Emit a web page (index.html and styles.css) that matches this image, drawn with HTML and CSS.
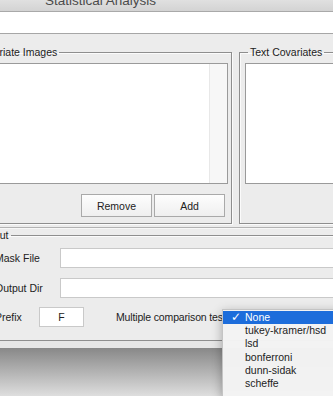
FILE: index.html
```html
<!DOCTYPE html>
<html lang="en">
<head>
    <meta charset="UTF-8">
    <title>Statistical Analysis</title>
    <link rel="stylesheet" href="styles.css">
</head>
<body>
    <div class="window">
        <div class="titlebar"><span>Statistical Analysis</span></div>
        <div class="toolbar"></div>
        <div class="content">
            <div class="top-row">
                <fieldset class="group images">
                    <legend>Covariate Images</legend>
                    <div class="listbox"><div class="scroll"></div></div>
                    <div class="buttons">
                        <button type="button">Remove</button>
                        <button type="button">Add</button>
                    </div>
                </fieldset>
                <fieldset class="group text-cov">
                    <legend>Text Covariates</legend>
                    <div class="listbox"></div>
                </fieldset>
            </div>
            <div class="separator"></div>
            <fieldset class="group output">
                <legend>Output</legend>
                <div class="row">
                    <label for="mask">Mask File</label>
                    <input type="text" id="mask">
                </div>
                <div class="row">
                    <label for="outdir">Output Dir</label>
                    <input type="text" id="outdir">
                </div>
                <div class="row prefix-row">
                    <label for="prefix">Prefix</label>
                    <input type="text" id="prefix" value="F">
                    <span class="mc-label">Multiple comparison test</span>
                </div>
            </fieldset>
        </div>
    </div>
    <div class="edge"></div>
    <div class="desk"></div>

    <ul class="popup">
        <li class="selected"><span class="check">&#10003;</span>None</li>
        <li>tukey-kramer/hsd</li>
        <li>lsd</li>
        <li>bonferroni</li>
        <li>dunn-sidak</li>
        <li>scheffe</li>
    </ul>
</body>
</html>
```

FILE: styles.css
```css
body { margin: 0; width: 333px; height: 396px; overflow: hidden; position: relative; background: #dcdcdc; font-family: "Liberation Sans", Arial, sans-serif; font-size: 10.5px; color: #222; }
.window { margin-left: -40px; width: 480px; background: #ececec; }
.titlebar { height: 11px; overflow: hidden; border-bottom: 1px solid #a9a9a9; background: linear-gradient(#e0e0e0, #d3d3d3); }
.titlebar span { display: block; margin-top: -6px; padding-left: 85px; font-size: 13.5px; line-height: 13px; color: #4b4b4b; }
.toolbar { height: 21px; background: #fff; border-bottom: 1px solid #a6a6a6; }
.content { padding: 12px 0 0 8px; }
.top-row { display: flex; gap: 7px; }

fieldset.group { margin: 0; min-width: 0; box-sizing: border-box; border: 1px solid #8e8e8e; box-shadow: inset 1px 1px 0 #fbfbfb, 1px 1px 0 #fbfbfb; }
legend { padding: 0 2px; font-size: 10.5px; line-height: 13px; color: #222; }
.images { width: 264px; padding: 4px 3px 6px 4px; }
.text-cov { width: 200px; padding: 4px 3px 6px 5px; }
.text-cov legend { margin-left: 3px; }

.listbox { height: 121px; box-sizing: border-box; border: 1px solid #9a9a9a; background: #fff; display: flex; justify-content: flex-end; }
.scroll { width: 17px; background: #f7f7f7; border-left: 1px solid #e8e8e8; }

.buttons { display: flex; justify-content: flex-end; gap: 2px; margin-top: 10px; padding-right: 3px; }
button { width: 71px; height: 23px; padding: 0; border: 1px solid #a9a9a9; border-radius: 0; background: linear-gradient(#fdfdfd, #efefef); font-family: inherit; font-size: 10.5px; color: #222; }

.separator { margin-top: 3px; border-top: 1px solid #b3b3b3; border-bottom: 1px solid #f7f7f7; }

.output { width: 472px; margin-top: 1px; padding: 6px 0 13px 26px; border-bottom-color: #6c6c6c; }
.output legend { margin-left: -20px; }
.row { display: grid; grid-template-columns: 65px 1fr; align-items: center; height: 20px; margin-bottom: 10px; }
.row input { height: 20px; box-sizing: border-box; border: 1px solid #c9c9c9; background: #fff; font-family: inherit; font-size: 10.5px; color: #222; padding: 0 4px; }
.prefix-row { display: flex; margin-top: -1px; margin-bottom: 0; }
.prefix-row label { width: 44px; }
.prefix-row input { width: 45px; text-align: center; }
.mc-label { margin-left: 32px; white-space: nowrap; letter-spacing: -0.15px; }

.edge { height: 7px; background: #e6e6e6; }
.desk { height: 48px; background: linear-gradient(#888, #dedede); }

.popup { position: absolute; left: 222px; top: 309px; width: 130px; margin: 0; padding: 1px 0 6px; list-style: none; background: rgba(243, 243, 243, 0.98); border: 1px solid #c4c4c4; box-shadow: 0 3px 10px rgba(0, 0, 0, 0.3); }
.popup li { height: 13.2px; line-height: 13px; padding-left: 22px; position: relative; color: #222; }
.popup li.selected { background: #1d6ddb; color: #fff; }
.check { position: absolute; left: 8px; top: 0; font-family: "DejaVu Sans", sans-serif; font-size: 12px; }
```
